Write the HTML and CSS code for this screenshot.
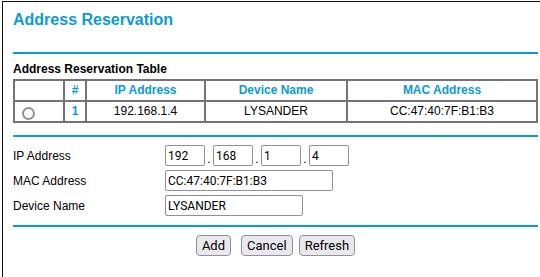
FILE: index.html
```html
<!DOCTYPE html>
<html lang="en">
<head>
    <meta charset="UTF-8">
    <title>Address Reservation</title>
    <link rel="stylesheet" href="styles.css">
</head>
<body>
    <div class="frame">
        <h1>Address Reservation</h1>
        <div class="rule"></div>

        <div class="table-title">Address Reservation Table</div>
        <table class="res-table">
            <colgroup>
                <col class="c-sel">
                <col class="c-num">
                <col class="c-ip">
                <col class="c-name">
                <col>
            </colgroup>
            <tr>
                <th></th>
                <th>#</th>
                <th>IP Address</th>
                <th>Device Name</th>
                <th>MAC Address</th>
            </tr>
            <tr>
                <td class="sel"><input type="radio" class="radio" name="sel"></td>
                <td class="num">1</td>
                <td>192.168.1.4</td>
                <td>LYSANDER</td>
                <td>CC:47:40:7F:B1:B3</td>
            </tr>
        </table>

        <div class="rule rule-mid"></div>

        <div class="form">
            <label>IP Address</label>
            <div class="ip">
                <input type="text" class="field octet" value="192"><span class="dot">.</span>
                <input type="text" class="field octet" value="168"><span class="dot">.</span>
                <input type="text" class="field octet" value="1"><span class="dot">.</span>
                <input type="text" class="field octet" value="4">
            </div>
            <label>MAC Address</label>
            <div><input type="text" class="field mac" value="CC:47:40:7F:B1:B3"></div>
            <label>Device Name</label>
            <div><input type="text" class="field devname" value="LYSANDER"></div>
        </div>

        <div class="rule rule-end"></div>

        <div class="buttons">
            <button class="btn btn-add">Add</button>
            <button class="btn">Cancel</button>
            <button class="btn">Refresh</button>
        </div>
    </div>
</body>
</html>
```

FILE: styles.css
```css
html, body {
    margin: 0;
    padding: 0;
    background: #fff;
}
body {
    font-family: "Liberation Sans", Arial, sans-serif;
    font-size: 12px;
    color: #000;
}
.frame {
    margin: 1px 0 0 2px;
    border-top: 1px solid #111;
    border-left: 1px solid #111;
    padding: 0 2px 0 10px;
    height: 276px;
    box-sizing: border-box;
}
h1 {
    margin: 8px 0 0;
    font-size: 16px;
    line-height: 20px;
    font-weight: bold;
    color: #0a9bd4;
}
.rule {
    height: 2px;
    background-color: #0a9bd4;
    margin-top: 22px;
}
.rule-mid {
    margin-top: 12px;
}
.rule-end {
    margin-top: 9px;
}
.table-title {
    margin-top: 8px;
    font-weight: bold;
    line-height: 15px;
}
.res-table {
    margin-top: 2px;
    width: 100%;
    border-collapse: collapse;
    border: 2px solid #747474;
}
.res-table th,
.res-table td {
    border: 2px solid #747474;
    padding: 2px 4px;
    line-height: 15px;
    text-align: center;
    font-size: 12px;
}
.res-table th {
    color: #0a9bd4;
    font-weight: bold;
}
.c-sel { width: 50px; }
.c-num { width: 22px; }
.c-ip { width: 119px; }
.c-name { width: 142px; }
.res-table td.sel {
    text-align: left;
    padding: 0 2px;
}
.res-table td.num {
    color: #0a9bd4;
    font-weight: bold;
}
.radio {
    appearance: none;
    -webkit-appearance: none;
    width: 13px;
    height: 13px;
    margin: 3px 0 0 5px;
    border: 2px solid #8f8f9d;
    border-radius: 50%;
    background: #fff;
    vertical-align: top;
}
.form {
    margin-top: 8px;
    display: grid;
    grid-template-columns: 152px 1fr;
    row-gap: 4px;
    align-items: center;
}
.form > div {
    display: flex;
    align-items: center;
}
.field {
    box-sizing: border-box;
    height: 21px;
    margin: 0;
    padding: 0 2px;
    border: 1px solid #8f8f9d;
    border-radius: 2px;
    font-family: Roboto, sans-serif;
    font-size: 12px;
    color: #000;
    background: #fff;
}
.octet { width: 40px; }
.mac { width: 168px; }
.devname { width: 138px; }
.dot {
    width: 8px;
    text-align: center;
    align-self: flex-end;
    line-height: 14px;
}
.buttons {
    margin-top: 8px;
    display: flex;
    justify-content: center;
    gap: 6px;
}
.btn {
    height: 21px;
    padding: 0 5px;
    border: 1px solid #8f8f9d;
    border-radius: 4px;
    background-color: #e9e9ed;
    font-family: Roboto, sans-serif;
    font-size: 13px;
    color: #000;
}
.btn-add {
    margin-right: 4px;
}
```
